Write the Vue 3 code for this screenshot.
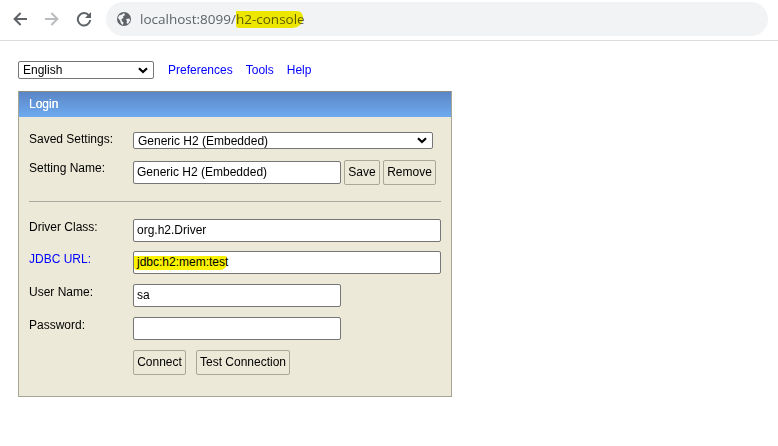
<script setup>
const language = 'English'
const saved = 'Generic H2 (Embedded)'
</script>

<template>
  <div class="page">
    <header class="chrome">
      <div class="nav">
        <svg class="ico" viewBox="0 0 16 16"><path d="M15 8H3M8.6 2 2.6 8l6 6" fill="none" stroke="#5f6368" stroke-width="2"/></svg>
        <svg class="ico" viewBox="0 0 16 16"><path d="M1 8H13M7.4 2l6 6-6 6" fill="none" stroke="#babcbe" stroke-width="2"/></svg>
        <svg class="ico" viewBox="0 0 16 16"><path d="M13 4.6A6.2 6.2 0 1 0 14.2 9" fill="none" stroke="#5f6368" stroke-width="2"/><path d="M15 1v6H9z" fill="#5f6368"/></svg>
      </div>
      <div class="omnibox">
        <svg class="globe" viewBox="0 0 14 14">
          <circle cx="7" cy="7" r="7" fill="#5f6368"/>
          <path d="M2 3.5 5 2.5 7 1 8 3 6 4.5 6.5 6 4.5 7 4.8 9 6.5 10.5 6 13 4 11.5 3 8.5 1 6zM9 7l3.5-.5L13 8.5 11 12 9.5 11 10 9z" fill="#f1f3f4"/>
        </svg>
        <span class="url">localhost:8099/<span class="mark">h2-console<span class="swipe url-swipe"></span></span></span>
      </div>
    </header>

    <main class="content">
      <div class="toolbar">
        <select class="lang"><option>{{ language }}</option></select>
        <a class="link first">Preferences</a>
        <a class="link tools">Tools</a>
        <a class="link help">Help</a>
      </div>

      <section class="panel">
        <div class="title">Login</div>
        <div class="body">
          <div class="row saved">
            <label>Saved Settings:</label>
            <select class="saved-select"><option>{{ saved }}</option></select>
          </div>
          <div class="row name">
            <label>Setting Name:</label>
            <input class="short" :value="saved" />
            <button class="btn save">Save</button>
            <button class="btn remove">Remove</button>
          </div>
          <hr />
          <div class="row driver">
            <label>Driver Class:</label>
            <input class="long" value="org.h2.Driver" />
          </div>
          <div class="row jdbc">
            <label class="blue">JDBC URL:</label>
            <div class="field long">jdbc:h2:mem:test<span class="swipe jdbc-swipe"></span></div>
          </div>
          <div class="row user">
            <label>User Name:</label>
            <input class="short" value="sa" />
          </div>
          <div class="row pass">
            <label>Password:</label>
            <input class="short" type="password" />
          </div>
          <div class="row actions">
            <button class="btn connect">Connect</button>
            <button class="btn test">Test Connection</button>
          </div>
        </div>
      </section>
    </main>
  </div>
</template>

<style>
html, body { margin: 0; background: #fff; }
</style>

<style scoped>
.page { width: 778px; height: 446px; overflow: hidden; font: 12px "Liberation Sans", Arial, sans-serif; color: #000; }
.chrome { height: 40px; border-bottom: 1px solid #dcdcdc; display: flex; align-items: flex-start; }
.nav { display: flex; gap: 16px; padding: 11px 0 0 12px; width: 106px; box-sizing: border-box; }
.ico { width: 16px; height: 16px; flex: none; }
.omnibox { width: 662px; height: 34px; margin-top: 2px; border-radius: 17px; background: #f1f3f4; display: flex; align-items: center; padding-left: 11px; box-sizing: border-box; }
.globe { width: 14px; height: 14px; margin-right: 9px; flex: none; }
.url { font: 13.5px "Open Sans", sans-serif; color: #5f6368; }
.mark { position: relative; color: #5f6368; }
.swipe { position: absolute; background: #fbf200; mix-blend-mode: multiply; }
.url-swipe { left: 0; right: 2px; top: 1px; bottom: 0; border-radius: 0 6px 10px 3px; }
.content { padding: 20px 18px 0; }
.toolbar { display: flex; align-items: center; height: 18px; }
select { appearance: none; padding: 0 0 0 4px; font: 12px "Liberation Sans", Arial, sans-serif; color: #000; border: 1px solid #767676; border-radius: 2px; box-sizing: border-box; background: #fff url("data:image/svg+xml,%3Csvg xmlns='http://www.w3.org/2000/svg' width='10' height='7'%3E%3Cpath d='M1 1.2 5 5l4-3.8' fill='none' stroke='%23000' stroke-width='2.2'/%3E%3C/svg%3E") no-repeat right 5px center; }
.lang { width: 136px; height: 18px; }
.link { color: #0000ff; margin-left: 14px; }
.tools, .help { margin-left: 13px; }
.panel { width: 434px; height: 306px; margin-top: 12px; border: 1px solid #a7a596; border-top-color: #8d8d86; background: #ece9d8; box-sizing: border-box; }
.title { height: 25px; line-height: 24px; padding-left: 10px; color: #fff; background: linear-gradient(#5b86c6, #6eaaf0); text-shadow: 0 0 .5px #fff; }
.body { padding: 0 10px; }
.row { display: flex; align-items: flex-start; }
.row label { width: 104px; flex: none; }
.blue { color: #0000ff; }
.saved { margin-top: 15px; height: 17px; }
.saved-select { width: 300px; height: 17px; }
input, .field { height: 23px; box-sizing: border-box; border: 1px solid #767676; border-radius: 2px; background: #fff; font: 12px "Liberation Sans", Arial, sans-serif; padding: 0 3px 2px; margin: 0; outline: none; }
.field { line-height: 20px; position: relative; }
.short { width: 208px; }
.long { width: 308px; }
.name { margin-top: 11px; height: 25px; }
.name label { padding-top: 1px; }
.name input { margin-top: 1px; }
.btn { height: 25px; box-sizing: border-box; border: 1px solid #a9a797; border-radius: 2px; background: #ece9d8; font: 12px "Liberation Sans", Arial, sans-serif; padding: 0 0 2px; color: #000; }
.save { width: 36px; margin-left: 3px; }
.remove { width: 53px; margin-left: 3px; }
hr { height: 1px; border: 0; background: #a9a9a0; margin: 16px 0 17px; }
.driver { height: 23px; }
.jdbc { margin-top: 9px; height: 23px; }
.user { margin-top: 10px; height: 23px; }
.pass { margin-top: 10px; height: 23px; }
.driver label, .jdbc label, .user label, .pass label { padding-top: 1px; }
.actions { margin-top: 10px; padding-left: 104px; }
.connect { width: 53px; }
.test { width: 94px; margin-left: 10px; }
.jdbc-swipe { left: 0; top: 4px; width: 93px; height: 14px; border-radius: 0 2px 7px 3px; }
</style>
